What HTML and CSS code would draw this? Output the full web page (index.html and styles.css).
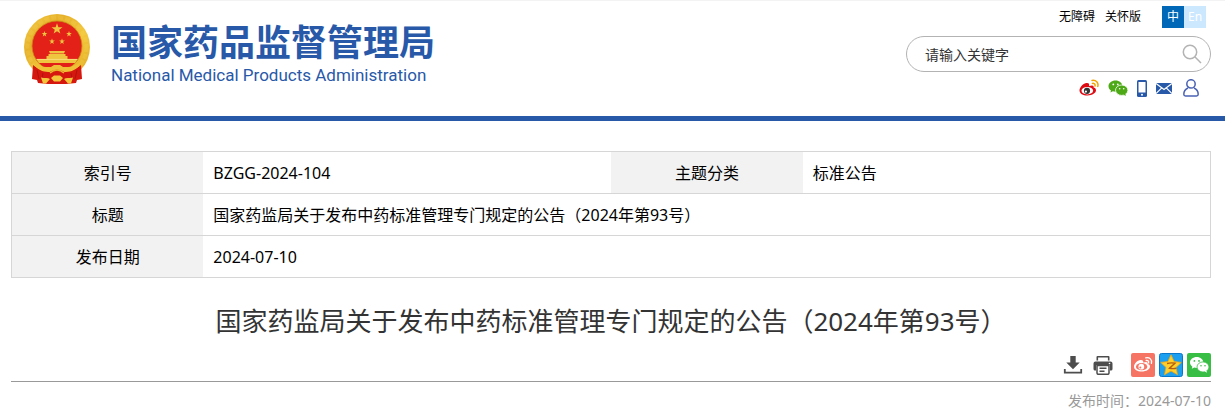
FILE: index.html
```html
<!doctype html>
<html lang="zh-CN">
<head>
    <meta charset="utf-8">
    <title>国家药监局关于发布中药标准管理专门规定的公告（2024年第93号）</title>
    <link rel="stylesheet" href="styles.css">
</head>
<body>
    <header class="header">
        <a href="#" class="logo">
            <svg class="emblem" viewBox="0 0 66 70" aria-hidden="true">
                <defs>
                    <linearGradient id="gold" x1="0" y1="0" x2="1" y2="1">
                        <stop offset="0" stop-color="#f5cd45"/>
                        <stop offset=".3" stop-color="#e6b02a"/>
                        <stop offset=".6" stop-color="#f3c83d"/>
                        <stop offset="1" stop-color="#dfa51f"/>
                    </linearGradient>
                    <path id="star" d="M0-5 1.2-1.6 4.8-1.5 1.9.6 2.9 4 0 2-2.9 4-1.9.6-4.8-1.5-1.2-1.6z"/>
                </defs>
                <circle cx="33" cy="33" r="33" fill="url(#gold)"/>
                <circle cx="33" cy="33" r="29.500" fill="none" stroke="#f8da62" stroke-width="4" stroke-dasharray="5 2" opacity=".2"/>
                <circle cx="33" cy="32" r="25" fill="#e32119" stroke="#c98b16" stroke-width=".8"/>
                <g fill="#efc540">
                    <use href="#star" transform="translate(33 15) scale(1.15)"/>
                    <use href="#star" transform="translate(20.500 20) scale(.6)"/>
                    <use href="#star" transform="translate(45 20) scale(.6)"/>
                    <use href="#star" transform="translate(28 27.500) scale(.6)"/>
                    <use href="#star" transform="translate(38 27.500) scale(.6)"/>
                    <path d="M25 37h16l-1 2.500H26zM24.500 40h17v2.500h-17zM22.500 42h21v3h-21zM12.500 45h41q-1 2.500-2.500 4H15q-1.500-1.500-2.500-4z"/>
                </g>
                <path d="M12.500 45.400h41" stroke="#fae38a" stroke-width=".8"/>
                <path d="M9 51c5 4 12 6 18 6h12c6 0 13-2 18-6l1 14-5 1-1 3-10 1H24l-10-1-1-3-5-1z" fill="#d5170f"/>
                <path d="M13 56l2 9M53 56l-2 9M19 59l-1 6M47 59l1 6" stroke="#a3110c" stroke-width=".8"/>
                <path d="M9 47c5 6 11 6 18 6l3-2h6l3 2c7 0 13 0 18-6l-2 5c-4 5-10 6-15 6-3-3-11-3-14 0-5 0-11-1-15-6z" fill="#efbf36"/>
                <path d="M26 59q7-6 14 0" stroke="#e9b22d" stroke-width="1.500" fill="none"/>
                <path d="M27 64l3-2.500h6l3 2.500-3 3.500h-6zM17 63.500c4 1 7 0 9 1.500l-4 4.500h-3zM49 63.500c-4 1-7 0-9 1.500l4 4.500h3z" fill="#f2c53b"/>
            </svg>
            <span class="logo-text">
                <span class="logo-cn">国家药品监督管理局</span>
                <span class="logo-en" lang="en">National Medical Products Administration</span>
            </span>
        </a>

        <div class="tools">
            <nav class="top-links">
                <a href="#">无障碍</a>
                <a href="#">关怀版</a>
                <span class="lang">
                    <a href="#" class="lang-cn">中</a><a href="#" class="lang-en">En</a>
                </span>
            </nav>
            <form class="search">
                <input type="text" class="search-input" placeholder="请输入关键字" aria-label="请输入关键字">
                <button type="button" class="search-btn" aria-label="搜索">
                    <svg width="20" height="20" viewBox="0 0 20 20" fill="none" stroke="#b3b3b3" stroke-width="1.500">
                        <circle cx="8" cy="8" r="6.700"/>
                        <path d="M12.800 12.800 19 19"/>
                    </svg>
                </button>
            </form>
            <div class="social">
                <a href="#" aria-label="微博">
                    <svg width="20" height="18" viewBox="0 0 20 18">
                        <path d="M8 4C5 3.500.500 8 .500 11.500c0 3 3.500 5 8 5 5 0 8.500-2.600 8.500-5.200 0-1.600-1.200-2.400-2.400-2.700.6-1.800-.6-3-4.600-1.500C10.500 5 10 4 8 4z" fill="#df0b12"/>
                        <ellipse cx="8.300" cy="11.700" rx="5.800" ry="3.700" fill="#fff"/>
                        <circle cx="8" cy="11.800" r="3.100" fill="#333"/>
                        <circle cx="6.900" cy="12.600" r="1.100" fill="#fff"/>
                        <path d="M13 1.400c4-.8 6.800 2.400 5.800 6M13.400 4.400c2-.3 3 1 2.600 2.600" stroke="#f0a400" stroke-width="1.500" fill="none" stroke-linecap="round"/>
                    </svg>
                </a>
                <a href="#" aria-label="微信">
                    <svg width="20" height="18" viewBox="0 0 20 18">
                        <path d="M7.500 1.500C3.600 1.500.500 4 .500 7.200c0 1.800 1 3.300 2.500 4.300l-.6 2 2.400-1.200c.9.300 1.700.4 2.700.4 3.800 0 6.900-2.500 6.900-5.500s-3-5.700-6.900-5.700z" fill="#4da915"/>
                        <ellipse cx="13.700" cy="11.200" rx="6.200" ry="5.200" fill="#4da915" stroke="#fff" stroke-width=".8"/>
                        <path d="M15.500 15.500l2.300 1.500-.6-2.500z" fill="#4da915"/>
                        <g fill="#fff"><circle cx="5.300" cy="5.400" r=".9"/><circle cx="9.800" cy="5.400" r=".9"/><circle cx="11.700" cy="9.800" r=".8"/><circle cx="15.700" cy="9.800" r=".8"/></g>
                    </svg>
                </a>
                <a href="#" aria-label="手机">
                    <svg width="10" height="18" viewBox="0 0 10 18">
                        <rect width="10" height="17" y="1" rx="1.500" fill="#2859a9"/>
                        <path d="M1.500 3h7v10.500h-7z" fill="#fff"/><circle cx="5" cy="15.700" r="1" fill="#fff"/>
                    </svg>
                </a>
                <a href="#" aria-label="邮箱">
                    <svg width="16" height="18" viewBox="0 0 16 18">
                        <path d="M0 4h16v11H0z" fill="#2859a9"/>
                        <path d="M0 4.600l8 6 8-6M0 14.600l5.500-5.500M16 14.600l-5.500-5.500" stroke="#fff" stroke-width="1.200" fill="none"/>
                    </svg>
                </a>
                <a href="#" class="user" aria-label="个人中心">
                    <svg width="16" height="18" viewBox="0 0 16 18" fill="none" stroke="#4a62b3" stroke-width="1.500">
                        <circle cx="8" cy="4.900" r="4.200"/>
                        <path d="M5 9C2.500 10 .800 12 .800 15.300q0 1.700 1.700 1.700h11q1.700 0 1.700-1.700C15.200 12 13.500 10 11 9"/>
                    </svg>
                </a>
            </div>
        </div>
    </header>

    <main class="main">
        <table class="info">
            <tr>
                <th scope="row">索引号</th>
                <td>BZGG-2024-104</td>
                <th scope="row">主题分类</th>
                <td>标准公告</td>
            </tr>
            <tr>
                <th scope="row">标题</th>
                <td colspan="3">国家药监局关于发布中药标准管理专门规定的公告（2024年第93号）</td>
            </tr>
            <tr>
                <th scope="row">发布日期</th>
                <td colspan="3">2024-07-10</td>
            </tr>
        </table>

        <h1 class="title">国家药监局关于发布中药标准管理专门规定的公告（2024年第93号）</h1>

        <div class="share">
            <button type="button" class="icon-btn" aria-label="下载">
                <svg width="20" height="20" viewBox="0 0 20 20" fill="#4d4d4d">
                    <path d="M7.300 1h5.400v6.500h4L10 14.300 3.300 7.500h4z"/>
                    <path d="M1.800 14v3.700h16.400V14" fill="none" stroke="#4d4d4d" stroke-width="1.800"/>
                </svg>
            </button>
            <button type="button" class="icon-btn" aria-label="打印">
                <svg width="20" height="20" viewBox="0 0 20 20" fill="#4d4d4d">
                    <path d="M3.500 5.500V2q0-1 1-1h11q1 0 1 1v3.500h-1.600V2.600H5.100v2.900z"/>
                    <path d="M2.500 6.500h15q2 0 2 2V14q0 1.500-1.500 1.500h-1V10H3v5.500H2q-1.500 0-1.500-1.500V8.500q0-2 2-2z"/>
                    <path d="M4 10.500h12v7.600q0 1.200-1.200 1.200H5.200q-1.200 0-1.200-1.200z" fill="#fff" stroke="#4d4d4d" stroke-width="1.500"/>
                    <path d="M6.500 12.500h7v1.400h-7zM6.500 15.500h5v1.400h-5z"/>
                    <circle cx="16.500" cy="8.500" r=".8" fill="#fff"/>
                </svg>
            </button>
            <a href="#" class="share-first" aria-label="分享到微博">
                <svg width="24" height="24" viewBox="0 0 24 24">
                    <rect width="24" height="24" rx="2" fill="#f67464"/>
                    <path d="M10 7c-3-.5-7 3.500-7 6.700C3 16.500 6.300 18.500 10.700 18.500c4.800 0 8.300-2.300 8.300-5 0-1.500-1.200-2.300-2.400-2.600.7-1.600-.7-2.700-4.400-1.300C12.500 8 11.800 7.200 10 7z" fill="#fff"/>
                    <ellipse cx="10.600" cy="13.700" rx="5.700" ry="3.600" fill="#f67464"/>
                    <circle cx="10.300" cy="13.700" r="2.900" fill="#fff"/>
                    <circle cx="9.300" cy="14.400" r="1" fill="#f67464"/>
                    <path d="M14.700 4.800c4-.8 6.600 1.900 5.700 5.500M15.200 7.500c1.900-.3 2.800.7 2.400 2.300" stroke="#fff" stroke-width="1.300" fill="none" stroke-linecap="round"/>
                </svg>
            </a>
            <a href="#" aria-label="分享到QQ空间">
                <svg width="24" height="24" viewBox="0 0 24 24">
                    <rect x=".5" y=".5" width="23" height="23" rx="2" fill="#1d9ff0" stroke="#0877c9"/>
                    <path d="M12 1.800l3.100 6.800 7.200.8-5.300 5 1.500 7.300L12 18l-6.500 3.700L7 14.400l-5.300-5 7.200-.8z" fill="#ffd02c" stroke="#f5a60c" stroke-width=".8"/>
                    <path d="M8 10.500q4-1 8-.3l-5.500 5q3.500.8 7 0" fill="none" stroke="#b45c10" stroke-width="1.400"/>
                </svg>
            </a>
            <a href="#" aria-label="分享到微信">
                <svg width="24" height="24" viewBox="0 0 24 24">
                    <rect width="24" height="24" rx="2" fill="#38bd45"/>
                    <path d="M9.700 4C6 4 3 6.400 3 9.500c0 1.700.9 3.200 2.400 4.200l-.6 2 2.400-1.200c.8.200 1.600.4 2.500.4 3.700 0 6.700-2.500 6.700-5.400S13.400 4 9.700 4z" fill="#fff"/>
                    <ellipse cx="16" cy="14" rx="6" ry="5.100" fill="#fff" stroke="#38bd45" stroke-width=".8"/>
                    <path d="M17.500 18.200l2.500 1.500-.6-2.500z" fill="#fff"/>
                    <g fill="#38bd45"><circle cx="7.400" cy="7.900" r=".9"/><circle cx="12" cy="7.900" r=".9"/><circle cx="14" cy="12.700" r=".8"/><circle cx="18" cy="12.700" r=".8"/></g>
                </svg>
            </a>
        </div>

        <p class="pub-date">发布时间：2024-07-10</p>
    </main>
</body>
</html>
```
FILE: styles.css
```css
body {
    margin: 0;
    background-color: #fff;
    color: #000;
    font-family: "Noto Sans", "Noto Sans CJK SC", sans-serif;
}
a {
    color: inherit;
    text-decoration: none;
}
svg {
    display: block;
}
.header {
    display: flex;
    justify-content: space-between;
    align-items: flex-start;
    padding: 5px 14px 19px 24px;
    border-top: 1px solid #f3f3f3;
    border-bottom: 5px solid #2859a9;
}
.logo {
    display: flex;
    gap: 21px;
    padding-top: 8px;
    color: #2859a9;
}
.emblem {
    width: 66px;
    height: 70px;
}
.logo-text {
    display: flex;
    flex-direction: column;
    padding-top: 6px;
}
.logo-cn {
    font-family: "Noto Sans CJK SC", sans-serif;
    font-size: 36px;
    font-weight: bold;
    line-height: 40px;
}
.logo-en {
    font-family: Roboto, sans-serif;
    font-size: 17px;
    line-height: 30px;
}
.tools {
    width: 305px;
}
.top-links {
    display: flex;
    justify-content: flex-end;
    gap: 10px;
    padding-right: 5px;
    font-size: 12px;
    line-height: 22px;
}
.lang {
    display: flex;
    margin-left: 11px;
    color: #fff;
    text-align: center;
}
.lang-cn, .lang-en {
    width: 22px;
}
.lang-cn {
    background-color: #0068b7;
}
.lang-en {
    background-color: #cce8ff;
}
.search {
    display: flex;
    align-items: center;
    height: 34px;
    margin-top: 8px;
    padding: 0 8px 0 18px;
    border: 1px solid #b3b3b3;
    border-radius: 18px;
}
.search-input {
    flex: 1;
    min-width: 0;
    padding: 0;
    border: none;
    outline: none;
    background: none;
    font-family: inherit;
    font-size: 14px;
}
.search-input::placeholder {
    color: #333;
}
.search-btn, .icon-btn {
    padding: 0;
    border: none;
    background: none;
    cursor: pointer;
}
.social {
    display: flex;
    justify-content: flex-end;
    gap: 9px;
    padding: 7px 12px 0 0;
}
.user {
    margin-left: 2px;
}
.main {
    padding: 30px 14px 0 11px;
}
.info {
    width: 100%;
    border-collapse: collapse;
    table-layout: fixed;
    border: 1px solid #d6d6d6;
    font-size: 16px;
    line-height: 25px;
}
.info tr {
    border-bottom: 1px solid #d6d6d6;
}
.info th, .info td {
    padding: 9px 10px 7px;
}
.info th {
    width: 16%;
    box-sizing: border-box;
    background-color: #f2f2f2;
    font-weight: normal;
    text-align: center;
}
.info td {
    text-align: left;
}
.title {
    margin: 23px 0 0;
    color: #333;
    font-size: 26px;
    font-weight: normal;
    line-height: 40px;
    text-align: center;
}
.share {
    display: flex;
    justify-content: flex-end;
    align-items: center;
    gap: 4px;
    margin-top: 12px;
    padding-bottom: 4px;
    border-bottom: 1px solid #999;
}
.icon-btn {
    margin-right: 6px;
}
.share-first {
    margin-left: 8px;
}
.pub-date {
    margin: 7px 0 0;
    color: #999;
    font-size: 14px;
    line-height: 24px;
    text-align: right;
}
```
